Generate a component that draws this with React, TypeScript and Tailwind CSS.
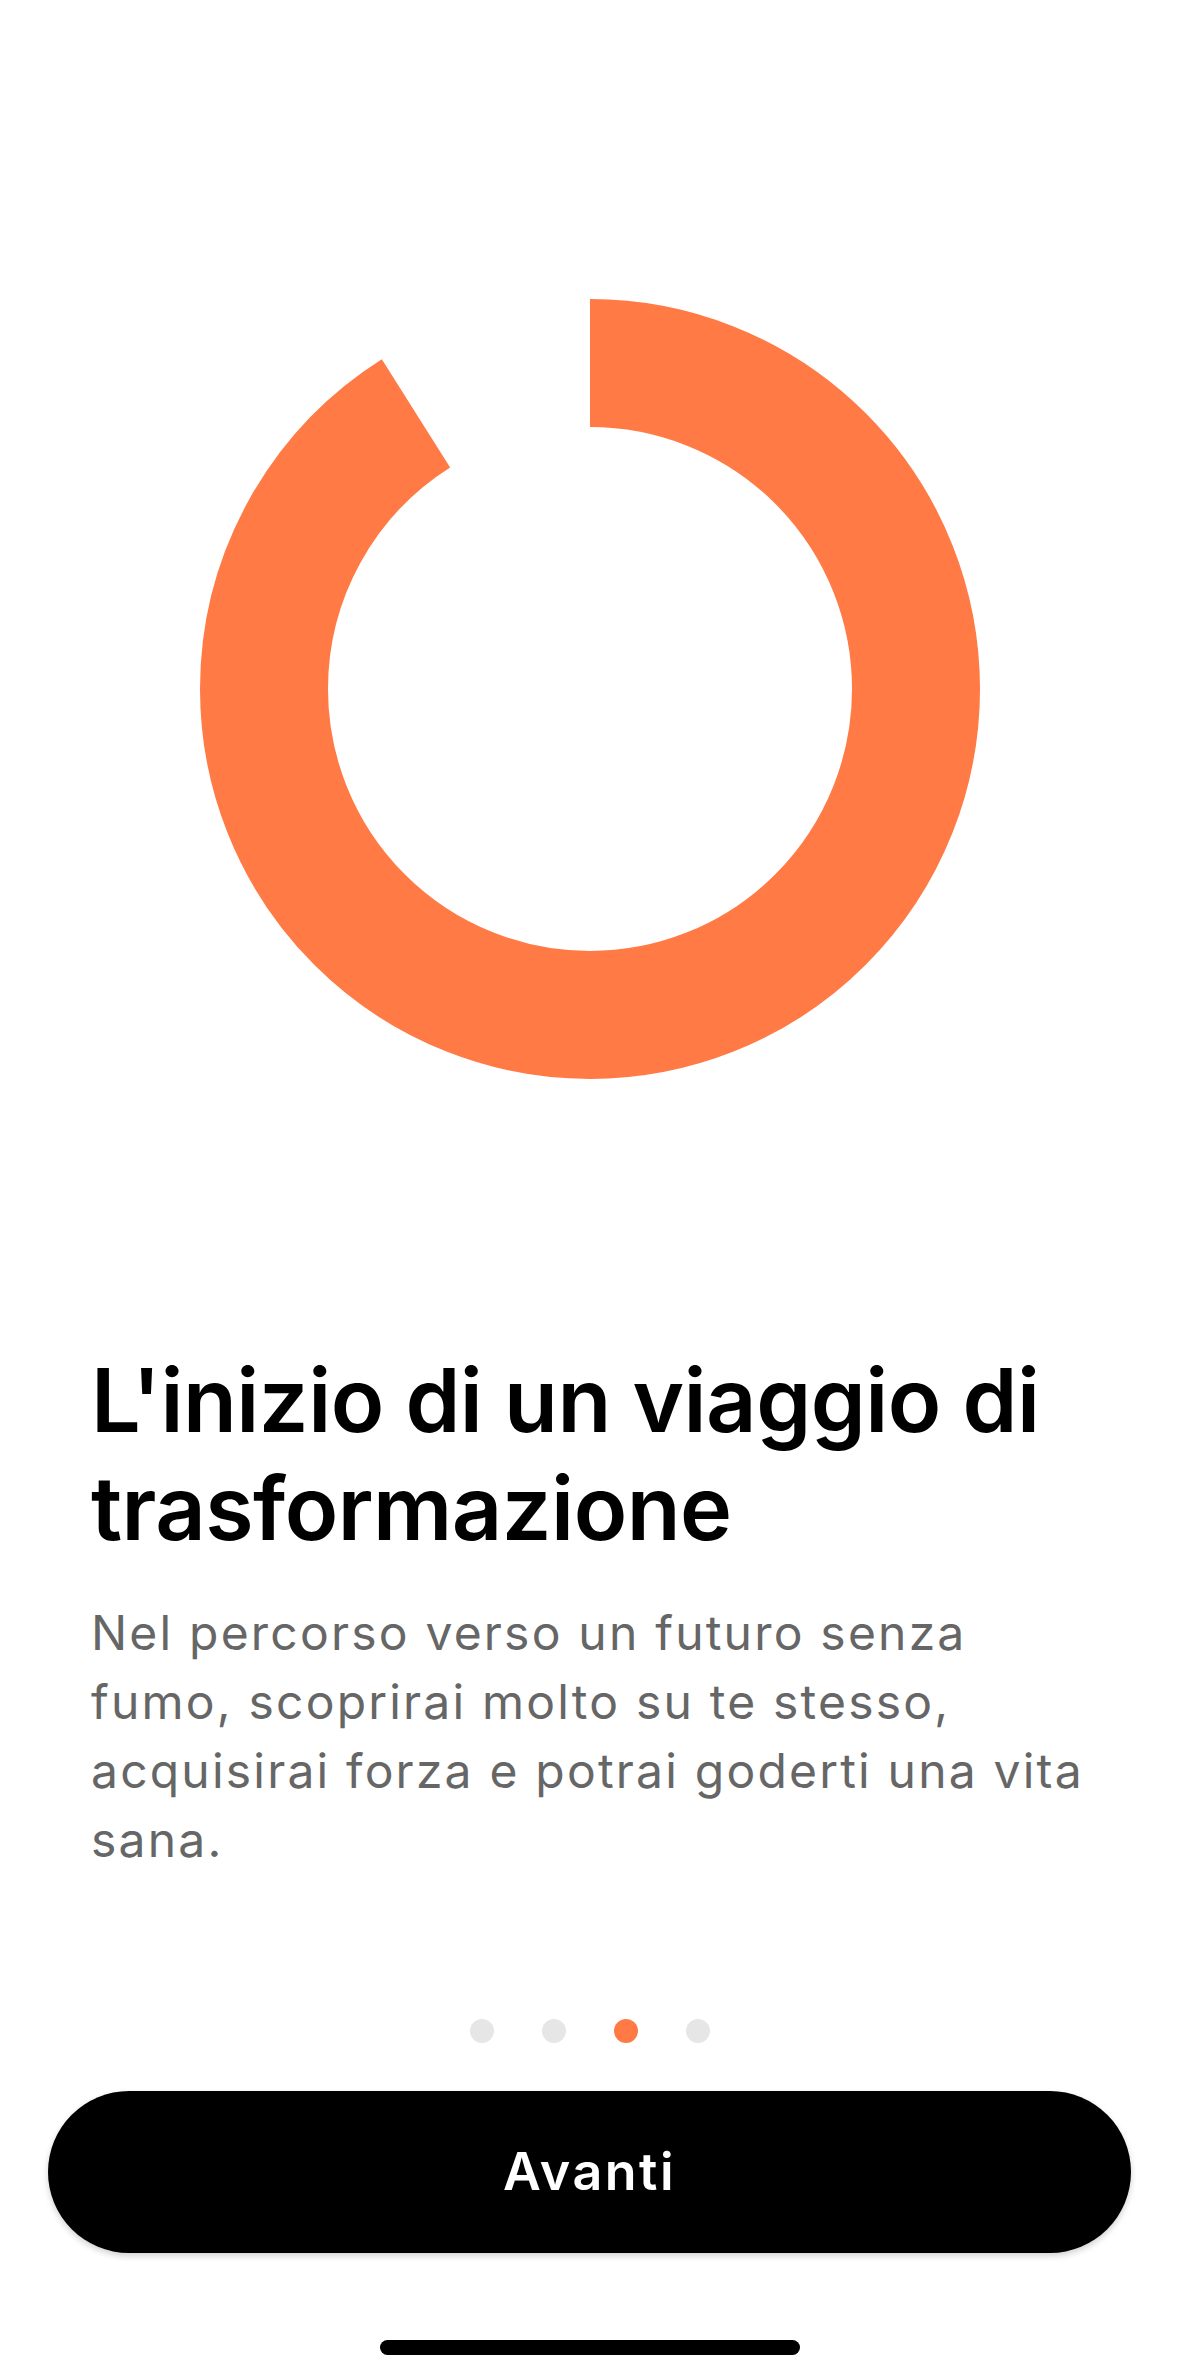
import React from 'react';

const RING_R = 326;
const RING_LEN = 2 * Math.PI * RING_R;
const RING_FILL = 0.91;

function ProgressRing() {
  return (
    <svg width={780} height={780} viewBox="0 0 780 780" className="block">
      <circle
        cx={390}
        cy={390}
        r={RING_R}
        fill="none"
        stroke="#ff7a45"
        strokeWidth={128}
        strokeDasharray={`${RING_LEN * RING_FILL} ${RING_LEN}`}
        transform="rotate(-90 390 390)"
      />
    </svg>
  );
}

export default function App() {
  const steps = [0, 1, 2, 3];
  const active = 2;

  return (
    <div
      className="flex flex-col items-center w-full min-h-screen bg-white"
      style={{ fontFamily: 'Inter, "Noto Sans", sans-serif' }}
    >
      {/* Illustration */}
      <div className="pt-[299px]">
        <ProgressRing />
      </div>

      {/* Copy */}
      <div className="w-full px-[91px] mt-[267px]">
        <h1 className="text-[88px] leading-[108px] font-semibold text-black tracking-[-0.5px]">
          L'inizio di un viaggio di
          <br />
          trasformazione
        </h1>
        <p className="mt-[36px] text-[48px] leading-[69px] text-[#666666] tracking-[2.2px]">
          Nel percorso verso un futuro senza
          <br />
          fumo, scoprirai molto su te stesso,
          <br />
          acquisirai forza e potrai goderti una vita
          <br />
          sana.
        </p>
      </div>

      {/* Pager */}
      <div className="flex gap-[48px] mt-[145px]">
        {steps.map((s) => (
          <span
            key={s}
            className={
              s === active
                ? 'w-[24px] h-[24px] rounded-full bg-[#ff7a45]'
                : 'w-[24px] h-[24px] rounded-full bg-[#e6e6e6]'
            }
          />
        ))}
      </div>

      {/* CTA */}
      <button className="mt-[48px] w-[1083px] h-[162px] rounded-full bg-black text-white text-[52px] font-semibold tracking-[2.5px] shadow-[0_3px_6px_rgba(0,0,0,0.18)]">
        Avanti
      </button>

      {/* Home indicator */}
      <div className="mt-[87px] w-[420px] h-[15px] rounded-full bg-black" />
    </div>
  );
}
